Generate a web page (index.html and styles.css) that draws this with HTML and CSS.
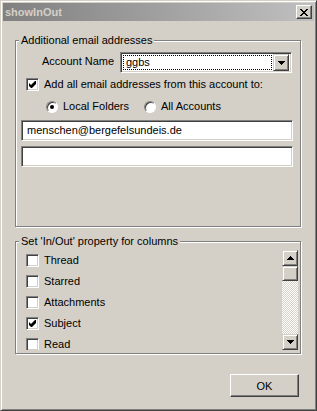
FILE: index.html
```html
<!DOCTYPE html>
<html lang="en">
<head>
    <meta charset="UTF-8">
    <title>showInOut</title>
    <link rel="stylesheet" href="styles.css">
</head>
<body>
    <div class="window">
        <div class="titlebar">
            <span class="title">showInOut</span>
            <span class="close-btn">
                <svg width="8" height="7" viewBox="0 0 8 7" shape-rendering="crispEdges"><path d="M0 0h2v1H0z M6 0h2v1H6z M1 1h2v1H1z M5 1h2v1H5z M2 2h4v1H2z M3 3h2v1H3z M2 4h4v1H2z M1 5h2v1H1z M5 5h2v1H5z M0 6h2v1H0z M6 6h2v1H6z"/></svg>
            </span>
        </div>

        <div class="dialog-body">
            <fieldset class="group group-accounts">
                <legend>Additional email addresses</legend>

                <div class="account-row">
                    <span class="account-label">Account Name</span>
                    <div class="select">
                        <div class="select-value">ggbs</div>
                        <span class="raised-btn select-btn">
                            <svg width="7" height="4" viewBox="0 0 7 4" shape-rendering="crispEdges"><path d="M0 0h7v1H0z M1 1h5v1H1z M2 2h3v1H2z M3 3h1v1H3z"/></svg>
                        </span>
                    </div>
                </div>

                <label class="check-row add-row">
                    <span class="checkbox">
                        <svg width="7" height="7" viewBox="0 0 7 7"><polygon points="0,2 2,4 6,0 7,0 7,3 3,7 2,7 0,5"/></svg>
                    </span>
                    Add all email addresses from this account to:
                </label>

                <div class="radio-row">
                    <label class="radio-item radio-local"><span class="radio selected"></span>Local Folders</label>
                    <label class="radio-item"><span class="radio"></span>All Accounts</label>
                </div>

                <div class="text-input">menschen@bergefelsundeis.de</div>
                <div class="text-input"></div>
            </fieldset>

            <fieldset class="group group-columns">
                <legend>Set 'In/Out' property for columns</legend>

                <div class="list">
                    <ul class="list-items">
                        <li class="check-row"><span class="checkbox"></span>Thread</li>
                        <li class="check-row"><span class="checkbox"></span>Starred</li>
                        <li class="check-row"><span class="checkbox"></span>Attachments</li>
                        <li class="check-row">
                            <span class="checkbox">
                                <svg width="7" height="7" viewBox="0 0 7 7"><polygon points="0,2 2,4 6,0 7,0 7,3 3,7 2,7 0,5"/></svg>
                            </span>
                            Subject
                        </li>
                        <li class="check-row"><span class="checkbox"></span>Read</li>
                    </ul>
                    <div class="scrollbar">
                        <span class="raised-btn scroll-btn">
                            <svg width="7" height="4" viewBox="0 0 7 4" shape-rendering="crispEdges"><path d="M3 0h1v1H3z M2 1h3v1H2z M1 2h5v1H1z M0 3h7v1H0z"/></svg>
                        </span>
                        <span class="raised-btn scroll-thumb"></span>
                        <span class="scroll-track"></span>
                        <span class="raised-btn scroll-btn">
                            <svg width="7" height="4" viewBox="0 0 7 4" shape-rendering="crispEdges"><path d="M0 0h7v1H0z M1 1h5v1H1z M2 2h3v1H2z M3 3h1v1H3z"/></svg>
                        </span>
                    </div>
                </div>
            </fieldset>

            <div class="actions">
                <button class="ok-btn">OK</button>
            </div>
        </div>
    </div>
</body>
</html>
```

FILE: styles.css
```css
* {
    margin: 0;
    padding: 0;
    box-sizing: border-box;
}

body {
    font-family: "Liberation Sans", Arial, sans-serif;
    font-size: 11px;
    line-height: 13px;
    color: #000;
    background-color: #d4d0c8;
}

.window {
    width: 317px;
    height: 411px;
    padding: 2px;
    background-color: #d4d0c8;
    border: 1px solid;
    border-color: #d4d0c8 #404040 #404040 #d4d0c8;
    box-shadow: inset 1px 1px #fff, inset -1px -1px #808080;
}

.titlebar {
    height: 18px;
    display: flex;
    align-items: center;
    justify-content: space-between;
    padding: 0 2px;
    background: linear-gradient(to right, #808080, #c0c0c0);
}

.title {
    color: #d4d0c8;
    font-weight: bold;
}

.raised-btn {
    display: flex;
    align-items: center;
    justify-content: center;
    background-color: #d4d0c8;
    border: 1px solid;
    border-color: #d4d0c8 #404040 #404040 #d4d0c8;
    box-shadow: inset 1px 1px #fff, inset -1px -1px #808080;
}

.close-btn {
    width: 16px;
    height: 14px;
    display: flex;
    align-items: center;
    justify-content: center;
    background-color: #d4d0c8;
    border: 1px solid;
    border-color: #fff #404040 #404040 #fff;
    box-shadow: inset -1px -1px #808080;
}

.dialog-body {
    padding: 13px 13px 0 12px;
}

/* group boxes */
.group {
    min-inline-size: 0;
    border: 1px solid #808080;
    box-shadow: inset 1px 1px #fff, 1px 1px #fff;
}

.group legend {
    margin-left: 3px;
    padding: 0 2px;
    line-height: 13px;
    background-color: #d4d0c8;
}

.group-accounts {
    padding-bottom: 59px;
}

.group-columns {
    margin-top: 8px;
    padding-bottom: 3px;
}

/* account row */
.account-row {
    display: flex;
    align-items: center;
    margin-top: 5px;
}

.account-label {
    width: 104px;
    flex-shrink: 0;
    padding-left: 26px;
    margin-top: -3px;
    white-space: nowrap;
}

.select {
    width: 172px;
    height: 21px;
    display: flex;
    align-items: center;
    padding: 2px;
    background-color: #fff;
    border: 1px solid;
    border-color: #808080 #fff #fff #808080;
    box-shadow: inset 1px 1px #404040, inset -1px -1px #d4d0c8;
}

.select-value {
    flex: 1;
    height: 15px;
    margin-right: 1px;
    padding-left: 2px;
    line-height: 13px;
    border: 1px dotted #000;
}

.select-btn {
    width: 16px;
    height: 17px;
}

/* checkboxes and radios */
.check-row {
    display: flex;
    align-items: center;
    gap: 5px;
}

.checkbox {
    width: 13px;
    height: 13px;
    flex-shrink: 0;
    display: flex;
    align-items: center;
    justify-content: center;
    background-color: #fff;
    border: 1px solid;
    border-color: #808080 #fff #fff #808080;
    box-shadow: inset 1px 1px #404040, inset -1px -1px #d4d0c8;
}

.add-row {
    margin: 5px 0 0 10px;
}

.radio-row {
    display: flex;
    margin: 9px 0 0 30px;
}

.radio-item {
    display: flex;
    align-items: center;
    gap: 5px;
}

.radio-local {
    width: 98px;
}

.radio {
    width: 12px;
    height: 12px;
    display: flex;
    align-items: center;
    justify-content: center;
    border-radius: 50%;
    background-color: #fff;
    border: 1px solid;
    border-color: #808080 #fff #fff #808080;
    box-shadow: inset 1px 1px #404040;
}

.radio.selected::after {
    content: "";
    width: 4px;
    height: 4px;
    border-radius: 50%;
    background-color: #000;
}

/* text inputs */
.text-input {
    height: 21px;
    margin: 7px 7px 0 5px;
    padding: 3px 5px;
    background-color: #fff;
    border: 1px solid;
    border-color: #808080 #fff #fff #808080;
    box-shadow: inset 1px 1px #404040, inset -1px -1px #d4d0c8;
}

.text-input + .text-input {
    margin-top: 5px;
}

/* column list */
.list {
    height: 100px;
    display: flex;
    margin: 2px 2px 0 2px;
}

.list-items {
    flex: 1;
    list-style: none;
    overflow: hidden;
}

.list-items .check-row {
    height: 21px;
    padding-left: 8px;
}

.scrollbar {
    width: 16px;
    display: flex;
    flex-direction: column;
}

.scroll-btn {
    height: 16px;
}

.scroll-thumb {
    height: 15px;
}

.scroll-track {
    flex: 1;
    background: repeating-conic-gradient(#fff 0 25%, #d4d0c8 0 50%) 0 0 / 2px 2px;
}

/* buttons */
.actions {
    display: flex;
    justify-content: flex-end;
    margin-top: 20px;
    padding-right: 2px;
}

.ok-btn {
    width: 69px;
    height: 23px;
    font-family: inherit;
    font-size: 11px;
    color: #000;
    background-color: #d4d0c8;
    border: 1px solid;
    border-color: #fff #404040 #404040 #fff;
    box-shadow: inset -1px -1px #808080;
}
```
